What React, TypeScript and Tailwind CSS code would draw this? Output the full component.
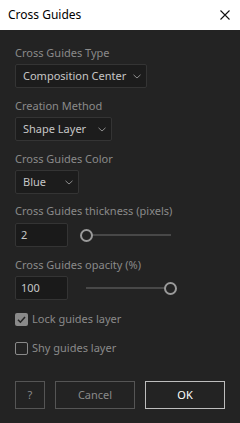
import React from "react";

const font = { fontFamily: '"Noto Sans", "Open Sans", sans-serif' };

function Chevron() {
  return (
    <svg width="8" height="5" viewBox="0 0 8 5" className="shrink-0">
      <path d="M0.5 0.8 L4 4 L7.5 0.8" fill="none" stroke="#8c8c8c" strokeWidth="1" />
    </svg>
  );
}

function Select({ label, width }: { label: string; width: string }) {
  return (
    <div
      className={`mt-[3px] flex h-[24px] items-center justify-between whitespace-nowrap rounded-[2px] border border-[#343434] bg-[#1c1c1c] pl-[7px] pr-[5px] text-[11px] text-[#c6c6c6] ${width}`}
    >
      <span>{label}</span>
      <Chevron />
    </div>
  );
}

function Label({ children, className = "" }: { children: React.ReactNode; className?: string }) {
  return (
    <div className={`h-[17px] whitespace-nowrap text-[11px] leading-[17px] text-[#8a8a8a] ${className}`}>
      {children}
    </div>
  );
}

function NumberBox({ value }: { value: string }) {
  return (
    <div className="flex h-[24px] w-[53px] items-center rounded-[2px] border border-[#343434] bg-[#1a1a1a] px-[5px] text-[11px] text-[#c6c6c6]">
      {value}
    </div>
  );
}

function Slider({ value }: { value: number }) {
  return (
    <div className="relative h-[13px] w-[97px]">
      <div className="absolute left-[6px] right-[6px] top-[5.5px] h-[2px] bg-[#484848]" />
      <div
        className="absolute top-0 h-[13px] w-[13px] rounded-full border-2 border-[#9a9a9a] bg-[#232323]"
        style={{ left: `${value * 84}px` }}
      />
    </div>
  );
}

function Check({ checked, label, className = "" }: { checked: boolean; label: string; className?: string }) {
  return (
    <div className={`flex h-[14px] items-center gap-[4px] text-[11px] text-[#8a8a8a] ${className}`}>
      {checked ? (
        <div className="flex h-[13px] w-[13px] items-center justify-center rounded-[2px] bg-[#8a8a8a]">
          <svg width="11" height="11" viewBox="0 0 11 11">
            <path d="M2 5.8 L4.4 8.2 L9 3" fill="none" stroke="#262626" strokeWidth="1.6" />
          </svg>
        </div>
      ) : (
        <div className="h-[13px] w-[13px] rounded-[2px] border border-[#8a8a8a]" />
      )}
      <span>{label}</span>
    </div>
  );
}

export default function App() {
  return (
    <div className="flex h-[423px] w-[240px] flex-col bg-[#232323]" style={font}>
      <div className="flex h-[30px] items-center justify-between bg-white pl-[8px] pr-[10px]">
        <span className="text-[12px] text-black">Cross Guides</span>
        <svg width="10" height="10" viewBox="0 0 10 10">
          <path d="M0.5 0.5 L9.5 9.5 M9.5 0.5 L0.5 9.5" stroke="#111" strokeWidth="1.1" />
        </svg>
      </div>

      <div className="flex flex-col px-[15px] pt-[14px]">
        <Label>Cross Guides Type</Label>
        <Select label="Composition Center" width="w-[132px]" />

        <Label className="mt-[9px]">Creation Method</Label>
        <Select label="Shape Layer" width="w-[97px]" />

        <Label className="mt-[9px]">Cross Guides Color</Label>
        <Select label="Blue" width="w-[64px]" />

        <Label className="mt-[8px]">Cross Guides thickness (pixels)</Label>
        <div className="mt-[4px] flex items-center gap-[12px]">
          <NumberBox value="2" />
          <Slider value={0} />
        </div>

        <Label className="mt-[9px]">Cross Guides opacity (%)</Label>
        <div className="mt-[3px] flex items-center gap-[12px]">
          <NumberBox value="100" />
          <Slider value={1} />
        </div>

        <Check checked label="Lock guides layer" className="mt-[12px]" />
        <Check checked={false} label="Shy guides layer" className="mt-[15px]" />

        <div className="mt-[26px] flex gap-[10px]">
          <div className="flex h-[28px] w-[30px] items-center justify-center border border-[#555] text-[11px] text-[#8a8a8a]">
            ?
          </div>
          <div className="flex h-[28px] w-[80px] items-center justify-center border border-[#555] text-[11px] text-[#8a8a8a]">
            Cancel
          </div>
          <div className="flex h-[28px] w-[80px] items-center justify-center border border-[#bdbdbd] text-[11px] text-white">
            OK
          </div>
        </div>
      </div>
    </div>
  );
}
